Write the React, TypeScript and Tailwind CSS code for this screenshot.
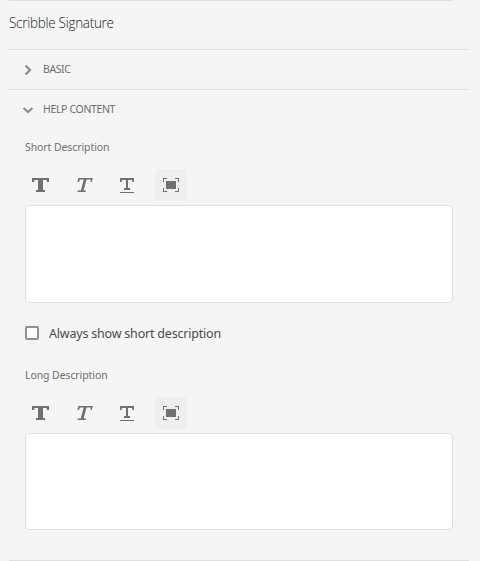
import type { ReactNode } from "react";

function ToolButton({ label, active, children }: { label: string; active?: boolean; children: ReactNode }) {
  return (
    <button aria-label={label} className={`h-8 w-8 shrink-0 rounded ${active ? "-ml-px bg-[#efefef]" : ""}`}>
      <svg width="32" height="32" viewBox="0 0 32 32" fill="#707070">
        {children}
      </svg>
    </button>
  );
}

function Toolbar() {
  return (
    <div className="flex h-8 gap-[11.67px]">
      <ToolButton label="Bold">
        <path d="M7 9h17v4h-2l-.5-2H18v10h2v2H11v-2h2V11H9.500l-.5 2H7z" />
      </ToolButton>
      <ToolButton label="Italic">
        <path d="M9.500 9h14.300l-1 4h-1.200l.1-2.400h-4.200l-2.900 10.800h2.400l-.4 1.600H8.400l.4-1.600h3l2.900-10.800h-3.500L9.700 13H8.400z" />
      </ToolButton>
      <ToolButton label="Underline">
        <path d="M8 9h14v4h-1.500l-.5-2h-4v8h2v2h-6v-2h2v-8h-4l-.5 2H8zM8 23h14v1H8z" />
      </ToolButton>
      <ToolButton label="Fullscreen" active>
        <path d="M11 12h10v8H11zM8 9h4v1H9v3H8zM20 9h4v4h-1v-3h-3zM8 19h1v3h3v1H8zM23 19h1v4h-4v-1h3z" />
      </ToolButton>
    </div>
  );
}

function Label({ children }: { children: string }) {
  return (
    <div className="h-4 origin-left scale-x-[0.91] text-[11.5px] leading-4 tracking-[-0.08px] whitespace-nowrap">
      {children}
    </div>
  );
}

export default function App() {
  return (
    <main className="flex h-[561px] w-[480px] flex-col overflow-hidden bg-[#f5f5f5] pl-[9px] font-['Noto_Sans','Open_Sans',sans-serif] text-[#6e6e6e]">
      <div className="h-px w-[444px] shrink-0 bg-[#dedede]" />
      <h1 className="h-12 w-[460px] shrink-0 origin-left scale-x-[0.93] pt-[10px] font-['Open_Sans','Noto_Sans',sans-serif] text-[14.5px] leading-6 font-light tracking-[-0.3px] text-[#222222]">
        Scribble Signature
      </h1>
      <section className="flex h-10 w-[460px] shrink-0 items-center border-t border-[#dedede] pl-[15px]">
        <svg width="10" height="12" fill="none" stroke="#8e8e8e" strokeWidth="2.3">
          <path d="M1.500 1.500L6 6L1.500 10.500" />
        </svg>
        <span className="ml-[9px] text-[10.5px] tracking-[-0.4px]">BASIC</span>
      </section>
      <section className="flex h-[471px] w-[460px] shrink-0 flex-col border-t border-[#dedede] pl-4">
        <div className="flex h-[39px] shrink-0 items-center">
          <svg width="12" height="10" fill="none" stroke="#8e8e8e" strokeWidth="2.3" className="-ml-[3px]">
            <path d="M1.500 3L6 7L10.500 3" />
          </svg>
          <span className="ml-[9px] text-[10.5px] tracking-[-0.35px]">HELP CONTENT</span>
        </div>
        <div className="mt-[10px]">
          <Label>Short Description</Label>
        </div>
        <div className="mt-[14px]">
          <Toolbar />
        </div>
        <textarea aria-label="Short description" className="mt-1 block h-[98px] w-[428px] shrink-0 resize-none rounded-[4px] border border-[#dedede] bg-white" />
        <label className="mt-[20px] flex h-5 shrink-0 items-center text-[#4b4b4b]">
          <span className="h-[14px] w-[14px] rounded-[2px] border-2 border-[#909090] bg-[#fafafa]" />
          <span className="ml-[10px] origin-left scale-x-[0.96] text-[13px] leading-5 tracking-[-0.2px] whitespace-nowrap">Always show short description</span>
        </label>
        <div className="mt-[24px]">
          <Label>Long Description</Label>
        </div>
        <div className="mt-[14px]">
          <Toolbar />
        </div>
        <textarea aria-label="Long description" className="mt-1 block h-[97px] w-[428px] shrink-0 resize-none rounded-[4px] border border-[#dedede] bg-white" />
      </section>
      <div className="h-px w-[460px] shrink-0 bg-[#dedede]" />
    </main>
  );
}
